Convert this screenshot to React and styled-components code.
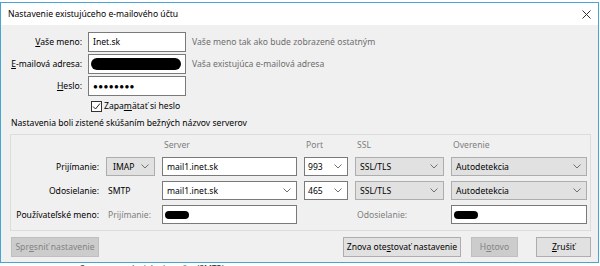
import React from 'react';
import styled, { createGlobalStyle } from 'styled-components';

const GlobalStyle = createGlobalStyle`
  html, body {
    margin: 0;
    padding: 0;
    background: #ffffff;
  }
  body {
    font-family: 'Noto Sans', 'Segoe UI', sans-serif;
    font-size: 8.6px;
    line-height: 12px;
    color: #000000;
    width: 600px;
    height: 266px;
    overflow: hidden;
  }
`;

const Page = styled.div`
  display: flex;
  flex-direction: column;
  width: 600px;
  height: 266px;
  overflow: hidden;
  background: #ffffff;
`;

const Backdrop = styled.div`
  height: ${(p) => p.h}px;
  flex: none;
  overflow: hidden;
  line-height: 12px;
  padding-left: ${(p) => p.left}px;
  white-space: nowrap;
`;

const BackdropText = styled.span`
  display: inline-block;
  transform: translateY(${(p) => p.shift}px);
  color: ${(p) => p.color || '#9a9a9a'};
`;

const Dialog = styled.div`
  flex: none;
  width: 597px;
  height: 259px;
  border: 1px solid #47a6d1;
  background: #f0f0f0;
  display: flex;
  flex-direction: column;
`;

const TitleBar = styled.div`
  height: 22px;
  flex: none;
  background: #ffffff;
  display: flex;
  align-items: center;
  justify-content: space-between;
  padding: 0 5px 0 7px;
`;

const Title = styled.span`
  font-size: 8.6px;
`;

const CloseButton = styled.span`
  display: flex;
  align-items: center;
  justify-content: center;
  width: 14px;
  height: 14px;
`;

const Body = styled.div`
  padding: 7px 7px 6px 8px;
  display: flex;
  flex-direction: column;
`;

const AccountGrid = styled.div`
  display: grid;
  grid-template-columns: 73px 98px auto;
  grid-template-rows: 20px 20px 20px 16px;
  column-gap: 6px;
  row-gap: 2px;
  align-items: center;
`;

const Label = styled.label`
  text-align: right;
  white-space: nowrap;
  color: ${(p) => (p.muted ? '#7d7d7d' : '#000000')};
`;

const Hint = styled.span`
  color: #6d6d6d;
  white-space: nowrap;
`;

const TextBox = styled.div`
  height: ${(p) => p.h || 20}px;
  box-sizing: border-box;
  border: 1px solid #7a7a7a;
  background: #ffffff;
  display: flex;
  align-items: center;
  justify-content: space-between;
  padding: 0 4px 0 ${(p) => p.padLeft ?? 4}px;
  white-space: nowrap;
  overflow: hidden;
`;

const Redacted = styled.span`
  display: inline-block;
  width: ${(p) => p.w}px;
  height: ${(p) => p.h}px;
  background: #000000;
  border-radius: ${(p) => p.h / 2}px;
`;

const Dots = styled.span`
  font-weight: bold;
  letter-spacing: 0.4px;
  font-size: 8px;
`;

const CheckRow = styled.div`
  grid-column: 2 / 4;
  display: flex;
  align-items: center;
  gap: 2px;
  padding-left: 3px;
`;

const CheckBox = styled.span`
  width: 11px;
  height: 11px;
  box-sizing: border-box;
  border: 1px solid #333333;
  background: #ffffff;
  display: flex;
  align-items: center;
  justify-content: center;
`;

const Caption = styled.div`
  margin: 2px 0 0 2px;
  height: 14px;
  display: flex;
  align-items: center;
  white-space: nowrap;
`;

const GroupBox = styled.div`
  margin: 4px 0 0 1px;
  width: 581px;
  box-sizing: border-box;
  border: 1px solid #dcdcdc;
  padding: 2px 0 6px 0;
  display: grid;
  grid-template-columns: 88px 49px 135px 44px 89px 136px;
  grid-template-rows: 15px 19px 19px 19px;
  column-gap: 7px;
  row-gap: 5px;
  align-items: center;
`;

const ColumnHead = styled.span`
  color: #7d7d7d;
  padding-left: ${(p) => p.left ?? 2}px;
  white-space: nowrap;
`;

const Select = styled.div`
  height: 19px;
  box-sizing: border-box;
  border: 1px solid ${(p) => (p.white ? '#7a7a7a' : '#adadad')};
  background: ${(p) => (p.white ? '#ffffff' : '#e1e1e1')};
  display: flex;
  align-items: center;
  justify-content: space-between;
  padding: 0 5px 0 ${(p) => p.padLeft ?? 6}px;
  white-space: nowrap;
`;

const PlainValue = styled.span`
  padding-left: 2px;
`;

const MutedValue = styled.span`
  color: #7d7d7d;
  padding-left: 2px;
  white-space: nowrap;
`;

const ButtonRow = styled.div`
  display: flex;
  align-items: center;
  margin-top: 6px;
  padding-left: 2px;
`;

const Spacer = styled.div`
  flex: 1;
`;

const Button = styled.div`
  height: 20px;
  box-sizing: border-box;
  width: ${(p) => p.w}px;
  margin-left: ${(p) => p.ml || 0}px;
  border: 1px solid ${(p) => (p.disabled ? '#bfbfbf' : '#adadad')};
  background: ${(p) => (p.disabled ? '#cccccc' : '#e1e1e1')};
  color: ${(p) => (p.disabled ? '#838383' : '#000000')};
  display: flex;
  align-items: center;
  justify-content: center;
  white-space: nowrap;
`;

const Chevron = () => (
  <svg width="8" height="5" viewBox="0 0 8 5">
    <path d="M0.5 0.5 L4 4 L7.5 0.5" fill="none" stroke="#707070" strokeWidth="1" />
  </svg>
);

const CloseIcon = () => (
  <svg width="9" height="9" viewBox="0 0 9 9">
    <path d="M0.5 0.5 L8.5 8.5 M8.5 0.5 L0.5 8.5" stroke="#333333" strokeWidth="1" />
  </svg>
);

const CheckMark = () => (
  <svg width="9" height="9" viewBox="0 0 9 9">
    <path d="M1 4.5 L3.5 7 L8 1.5" fill="none" stroke="#222222" strokeWidth="1" />
  </svg>
);

export default function App() {
  return (
    <Page>
      <GlobalStyle />
      <Backdrop h={2} left={120}>
        <BackdropText shift={-9}>Vaše meno:</BackdropText>
      </Backdrop>
      <Dialog>
        <TitleBar>
          <Title>Nastavenie existujúceho e-mailového účtu</Title>
          <CloseButton>
            <CloseIcon />
          </CloseButton>
        </TitleBar>
        <Body>
          <AccountGrid>
            <Label>
              <u>V</u>aše meno:
            </Label>
            <TextBox>Inet.sk</TextBox>
            <Hint>Vaše meno tak ako bude zobrazené ostatným</Hint>

            <Label>
              <u>E</u>-mailová adresa:
            </Label>
            <TextBox padLeft={2}>
              <Redacted w={92} h={12} />
            </TextBox>
            <Hint>Vaša existujúca e-mailová adresa</Hint>

            <Label>
              <u>H</u>eslo:
            </Label>
            <TextBox>
              <Dots>●●●●●●●●</Dots>
            </TextBox>
            <span />

            <span />
            <CheckRow>
              <CheckBox>
                <CheckMark />
              </CheckBox>
              <span>
                Zapa<u>m</u>ätať si heslo
              </span>
            </CheckRow>
          </AccountGrid>

          <Caption>Nastavenia boli zistené skúšaním bežných názvov serverov</Caption>

          <GroupBox>
            <span />
            <span />
            <ColumnHead>Server</ColumnHead>
            <ColumnHead>Port</ColumnHead>
            <ColumnHead>SSL</ColumnHead>
            <ColumnHead>Overenie</ColumnHead>

            <Label>Prijímanie:</Label>
            <Select>
              IMAP
              <Chevron />
            </Select>
            <TextBox h={19}>mail1.inet.sk</TextBox>
            <Select white padLeft={3}>
              993
              <Chevron />
            </Select>
            <Select padLeft={4}>
              SSL/TLS
              <Chevron />
            </Select>
            <Select padLeft={4}>
              Autodetekcia
              <Chevron />
            </Select>

            <Label>Odosielanie:</Label>
            <PlainValue>SMTP</PlainValue>
            <Select white padLeft={4}>
              mail1.inet.sk
              <Chevron />
            </Select>
            <Select white padLeft={3}>
              465
              <Chevron />
            </Select>
            <Select padLeft={4}>
              SSL/TLS
              <Chevron />
            </Select>
            <Select padLeft={4}>
              Autodetekcia
              <Chevron />
            </Select>

            <Label>Používateľské meno:</Label>
            <MutedValue>Prijímanie:</MutedValue>
            <TextBox h={19} padLeft={2}>
              <Redacted w={24} h={8} />
            </TextBox>
            <span />
            <MutedValue>Odosielanie:</MutedValue>
            <TextBox h={19} padLeft={2}>
              <Redacted w={24} h={8} />
            </TextBox>
          </GroupBox>

          <ButtonRow>
            <Button disabled w={88}>
              Spr<u>e</u>sniť nastavenie
            </Button>
            <Spacer />
            <Button w={118}>
              Znova ote<u>s</u>tovať nastavenie
            </Button>
            <Button disabled w={47} ml={10}>
              H<u>o</u>tovo
            </Button>
            <Button w={55} ml={18}>
              <u>Z</u>rušiť
            </Button>
          </ButtonRow>
        </Body>
      </Dialog>
      <Backdrop h={4} left={80}>
        <BackdropText shift={0} color="#333333">
          Server pre odosielanie pošty (SMTP)
        </BackdropText>
      </Backdrop>
    </Page>
  );
}
